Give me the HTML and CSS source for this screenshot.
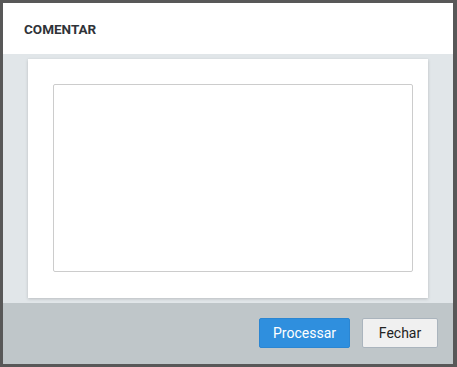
FILE: index.html
```html
<!DOCTYPE html>
<html lang="pt-BR">
<head>
  <meta charset="UTF-8">
  <title>Comentar</title>
  <link rel="stylesheet" href="styles.css">
</head>
<body>

  <div class="modal">
    <header class="modal-topo">
      COMENTAR
    </header>

    <main class="modal-corpo">
      <div class="cartao">
        <textarea class="comentario"></textarea>
      </div>
    </main>

    <footer class="modal-rodape">
      <button class="botao botao-primario">Processar</button>
      <button class="botao botao-padrao">Fechar</button>
    </footer>
  </div>

</body>
</html>
```

FILE: styles.css
```css
:root {
  --moldura: #585858;
  --fundo: #e1e6e9;
  --rodape: #bfc6c9;
  --azul: #2f8fde;
}
body {
  margin: 0;
  padding: 3px 4px 3px 3px;
  background-color: var(--moldura);
  font-family: Roboto, "Liberation Sans", Arial, sans-serif;
}
.modal {
  width: 450px;
  height: 361px;
  display: flex;
  flex-direction: column;
}
.modal-topo {
  height: 51px;
  box-sizing: border-box;
  background-color: #ffffff;
  color: #2f3338;
  font-size: 13.5px;
  font-weight: bold;
  padding: 0 21px;
  display: flex;
  align-items: center;
}
.modal-corpo {
  height: 249px;
  box-sizing: border-box;
  background-color: var(--fundo);
  padding: 5px 25px;
}
.cartao {
  height: 100%;
  box-sizing: border-box;
  background-color: #ffffff;
  padding: 25px 15px 26px 25px;
  box-shadow: 0 1px 3px rgba(0, 0, 0, 0.18);
}
.comentario {
  display: block;
  width: 360px;
  height: 188px;
  box-sizing: border-box;
  margin: 0;
  border: 1px solid #cccccc;
  border-radius: 2px;
  resize: none;
  background-color: #ffffff;
}
.modal-rodape {
  flex: 1;
  background-color: var(--rodape);
  padding: 15px 15px 0 0;
  display: flex;
  justify-content: flex-end;
  align-items: flex-start;
  gap: 12px;
}
.botao {
  height: 30px;
  box-sizing: border-box;
  border-radius: 2px;
  font-family: Roboto, "Liberation Sans", Arial, sans-serif;
  font-size: 14px;
  cursor: pointer;
  padding: 0;
}
.botao-primario {
  width: 91px;
  background-color: var(--azul);
  border: 1px solid #2b86d2;
  color: #ffffff;
}
.botao-padrao {
  width: 76px;
  background-color: #f0f0f0;
  border: 1px solid #aab4bd;
  color: #222222;
}
```
